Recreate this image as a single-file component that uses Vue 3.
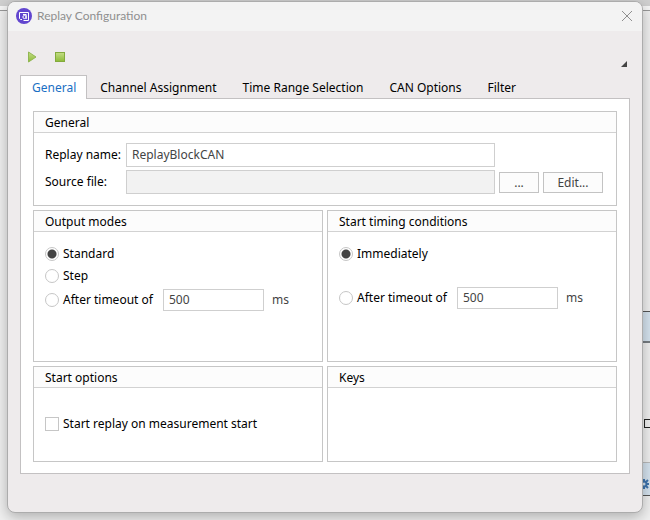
<template>
  <div class="desktop">
    <!-- Application behind the dialog -->
    <div class="backdrop" aria-hidden="true">
      <div class="backdrop-top"></div>
      <div class="backdrop-block first"></div>
      <div class="backdrop-node"></div>
      <div class="backdrop-block second">
        <svg class="gear" width="14" height="16" viewBox="0 0 14 16">
          <path d="M0 0h3v5h-3z" fill="#e0a83a" />
          <g stroke="#3f74ad" stroke-width="2" fill="none">
            <circle cx="4" cy="10" r="2.500" />
            <path d="M4 5v2M4 13v2M7 10h2M6 8l2-2M6 12l2 2" />
          </g>
        </svg>
      </div>
    </div>

    <section class="dialog" role="dialog" aria-labelledby="dialog-title">
      <header class="title-bar">
        <svg class="logo" width="16" height="16" viewBox="0 0 16 16">
          <circle cx="8" cy="8" r="8" fill="#6246cf" />
          <g fill="none" stroke="#fff" stroke-width="1">
            <path d="M6 11.500H4.500L3.500 10.500V4.500h9v8H7.500" />
            <circle cx="8.500" cy="9" r="1.600" />
            <path d="M7 6.500h3.200v4.500" />
          </g>
        </svg>
        <h1 id="dialog-title">Replay Configuration</h1>
        <button class="close-btn" aria-label="Close">
          <svg width="12" height="12" viewBox="0 0 12 12">
            <path d="M1 1l10 10M11 1L1 11" stroke="#8f8f8f" stroke-width="1" />
          </svg>
        </button>
      </header>

      <div class="toolbar">
        <button class="tool-btn" aria-label="Start">
          <svg width="12" height="12" viewBox="0 0 12 12">
            <defs>
              <linearGradient id="green" x1="0" y1="0" x2="0" y2="1">
                <stop offset="0" stop-color="#c4dd86" />
                <stop offset="1" stop-color="#8dbb38" />
              </linearGradient>
            </defs>
            <path d="M2.500 1L10 6 2.500 11z" fill="url(#green)" stroke="#91b653" stroke-width="1" />
          </svg>
        </button>
        <button class="tool-btn" aria-label="Stop">
          <svg width="12" height="12" viewBox="0 0 12 12">
            <rect x="1.500" y="1.500" width="9" height="9" fill="url(#green)" stroke="#83aa3d" />
          </svg>
        </button>
        <button class="more-btn" aria-label="More">
          <svg width="6" height="6" viewBox="0 0 6 6">
            <path d="M6 0v6H0z" fill="#444" />
          </svg>
        </button>
      </div>

      <nav class="tabs" role="tablist">
        <button
          v-for="tab in tabs"
          :key="tab"
          class="tab"
          :class="{ active: tab === activeTab }"
          role="tab"
          :aria-selected="tab === activeTab"
          @click="activeTab = tab"
        >
          {{ tab }}
        </button>
      </nav>

      <main class="panel">
        <section class="group wide">
          <h2>General</h2>
          <div class="form">
            <label for="replay-name">Replay name:</label>
            <input id="replay-name" v-model="replayName" class="field" type="text">
            <label for="source-file" class="row-two">Source file:</label>
            <input id="source-file" class="field" type="text" disabled>
            <button class="btn">...</button>
            <button class="btn">Edit...</button>
          </div>
        </section>

        <section class="group modes">
          <h2>Output modes</h2>
          <div class="options">
            <label class="option">
              <input v-model="outputMode" type="radio" name="output" value="standard">
              Standard
            </label>
            <label class="option">
              <input v-model="outputMode" type="radio" name="output" value="step">
              Step
            </label>
            <div class="timeout">
              <label class="option">
                <input v-model="outputMode" type="radio" name="output" value="timeout">
                After timeout of
              </label>
              <input v-model="outputTimeout" class="field" type="text" aria-label="Output timeout">
              <span class="unit">ms</span>
            </div>
          </div>
        </section>

        <section class="group modes">
          <h2>Start timing conditions</h2>
          <div class="options spaced">
            <label class="option">
              <input v-model="startMode" type="radio" name="start" value="immediately">
              Immediately
            </label>
            <div class="timeout">
              <label class="option">
                <input v-model="startMode" type="radio" name="start" value="timeout">
                After timeout of
              </label>
              <input v-model="startTimeout" class="field" type="text" aria-label="Start timeout">
              <span class="unit">ms</span>
            </div>
          </div>
        </section>

        <section class="group last">
          <h2>Start options</h2>
          <div class="checks">
            <label class="option">
              <input v-model="startOnMeasurement" type="checkbox">
              Start replay on measurement start
            </label>
          </div>
        </section>

        <section class="group last">
          <h2>Keys</h2>
        </section>
      </main>
    </section>
  </div>
</template>

<script setup>
import { ref } from 'vue'

const tabs = ['General', 'Channel Assignment', 'Time Range Selection', 'CAN Options', 'Filter']

const activeTab = ref('General')
const replayName = ref('ReplayBlockCAN')
const outputMode = ref('standard')
const outputTimeout = ref('500')
const startMode = ref('immediately')
const startTimeout = ref('500')
const startOnMeasurement = ref(false)
</script>

<style>
body {
  margin: 0;
  background: #f0f0f0;
}
</style>

<style scoped>
.desktop {
  position: relative;
  box-sizing: border-box;
  min-height: 100vh;
  padding: 1px 7px 7px;
  overflow: hidden;
  font-family: "Noto Sans", "Open Sans", sans-serif;
  font-size: 12px;
  line-height: 16px;
  color: #000;
}

.desktop * {
  box-sizing: border-box;
}

button,
input {
  font: inherit;
  color: inherit;
  margin: 0;
}

button {
  padding: 0;
  border: none;
  background: none;
}

svg {
  display: block;
}

.backdrop {
  position: absolute;
  inset: 0;
}

.backdrop-top {
  height: 11px;
  background: #f6f6f6;
  border-top: 6px solid #d0d0d0;
  border-bottom: 1px solid #999;
}

.backdrop-block {
  position: absolute;
  right: 0;
  width: 20px;
  background: #d5e3ef;
  border-top: 1px solid #555;
  border-bottom: 2px solid #777d82;
}

.backdrop-block.first {
  top: 311px;
  height: 32px;
}

.backdrop-block.second {
  top: 462px;
  height: 34px;
  border-top-color: #bbb;
  border-bottom: 1px solid #555;
}

.backdrop-node {
  position: absolute;
  top: 419px;
  right: -4px;
  width: 10px;
  height: 9px;
  border: 1px solid #222;
}

.gear {
  position: absolute;
  top: 11px;
  right: -4px;
}

.dialog {
  position: relative;
  padding-bottom: 38px;
  border: 1px solid #acacac;
  border-radius: 8px;
  background: #eeebec;
  box-shadow: 0 4px 14px rgba(0, 0, 0, .28);
  overflow: hidden;
}

.title-bar {
  display: flex;
  align-items: center;
  height: 29px;
  padding: 0 9px 2px 8px;
  background: #f3f3f3;
}

.title-bar h1 {
  flex: 1;
  margin: 0 0 0 5px;
  font-family: Lato, "Noto Sans", sans-serif;
  font-size: 12px;
  font-weight: 400;
  color: #8f8f8f;
}

.toolbar {
  display: flex;
  align-items: center;
  gap: 16px;
  height: 44px;
  padding: 8px 15px 0 18px;
}

.more-btn {
  margin: 14px 0 0 auto;
}

.tabs {
  display: flex;
  padding-left: 12px;
}

.tab {
  height: 23px;
  padding: 1px 12px 0;
  border: 1px solid transparent;
  border-bottom: none;
  line-height: 21px;
}

.tab.active {
  position: relative;
  z-index: 1;
  height: 24px;
  margin-bottom: -1px;
  padding: 1px 10px 1px 11px;
  border-color: #c3c1c2;
  background: #fff;
  color: #1a6fc4;
}

.panel {
  display: grid;
  grid-template-columns: 1fr 1fr;
  gap: 4px;
  margin: 0 12px;
  padding: 12px 12px 11px;
  border: 1px solid #c3c1c2;
  background: #fff;
}

.group {
  border: 1px solid #c6c6c6;
}

.group.wide {
  grid-column: 1 / -1;
}

.group.modes {
  min-height: 152px;
}

.group.last {
  min-height: 96px;
}

.group h2 {
  height: 21px;
  margin: 0;
  padding-left: 11px;
  border-bottom: 1px solid #d2d2d2;
  background: #fcfcfc;
  font-size: 12px;
  font-weight: 400;
  line-height: 21px;
}

.form {
  display: grid;
  grid-template-columns: 77px 1fr 40px 60px;
  align-items: center;
  gap: 3px 4px;
  padding: 10px 13px 11px 11px;
}

.form label {
  white-space: nowrap;
}

.row-two {
  grid-column: 1;
}

.field {
  width: 100%;
  height: 24px;
  padding: 0 5px 1px;
  border: 1px solid #cfcfcf;
  border-radius: 0;
  background: #fff;
  color: #444;
  outline: none;
}

.field:disabled {
  background: #f2f2f2;
}

.btn {
  height: 21px;
  border: 1px solid #c3c3c3;
  background: #fcfcfc;
  color: #444;
  line-height: 19px;
}

.options {
  display: flex;
  flex-direction: column;
  padding: 11px 11px 10px;
}

.option {
  display: flex;
  align-items: center;
  gap: 4px;
  height: 22px;
  white-space: nowrap;
}

.timeout {
  display: flex;
  align-items: center;
  margin-top: 2px;
}

.spaced .timeout {
  margin-top: 22px;
}

.timeout .field {
  width: 101px;
  height: 22px;
  margin: 0 8px 0 10px;
}

.unit {
  color: #444;
}

.option input {
  appearance: none;
  width: 14px;
  height: 14px;
  border: 1px solid #c6c6c6;
  background: #fff;
}

.option input[type="radio"] {
  border-radius: 50%;
}

.option input[type="radio"]:checked {
  background: radial-gradient(circle, #444 3px, #444 4px, #fff 5px);
}

.option input[type="checkbox"]:checked {
  background: #444;
}

.checks {
  padding: 25px 11px;
}
</style>
